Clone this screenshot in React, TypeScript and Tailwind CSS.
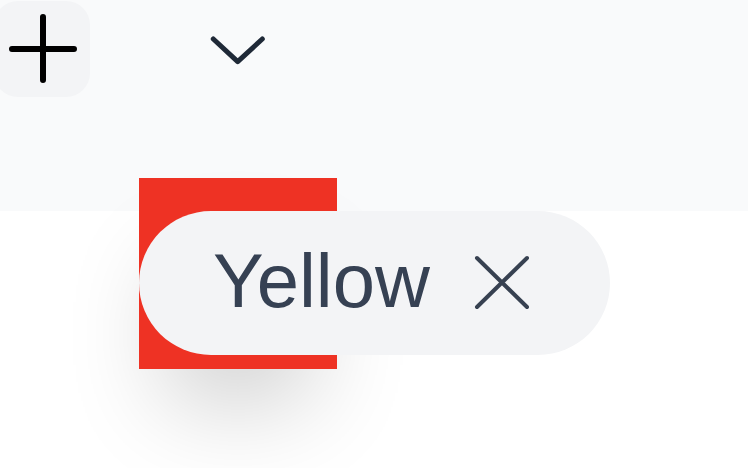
export default function App() {
  return (
    <div className="relative w-[748px] h-[468px] overflow-hidden bg-white font-['Liberation_Sans',Arial,sans-serif]">
      <div className="flex h-[211px] items-start bg-gray-50">
        <button className="-ml-[6px] mt-[1px] flex h-[96px] w-[96px] shrink-0 items-center justify-center rounded-[24px] bg-gray-100">
          <svg width="96" height="96" viewBox="0 0 96 96" fill="none" stroke="#000" strokeWidth="6" strokeLinecap="round">
            <path d="M18 48h62M49 16v63" />
          </svg>
        </button>
        <svg className="ml-[115px] mt-[30px] shrink-0" width="65" height="40" viewBox="0 0 65 40" fill="none" stroke="#1f2937" strokeWidth="5" strokeLinecap="round" strokeLinejoin="round">
          <path d="M8.3 9L32.7 31.7L57.3 9" />
        </svg>
      </div>

      {/* item being dragged */}
      <div className="absolute left-[139px] top-[178px] h-[191px] w-[198px] bg-[#ee3224] shadow-[0_60px_100px_-28px_rgba(0,0,0,0.2)]" />

      <div className="relative z-10 ml-[139px] flex h-[144px] w-[471px] items-center rounded-full bg-gray-100 pl-[74px]">
        <span className="mb-[5px] text-[76px] leading-none text-gray-700">Yellow</span>
        <svg className="ml-[42px] shrink-0" width="60" height="60" viewBox="0 0 60 60" fill="none" stroke="#374151" strokeWidth="4" strokeLinecap="round">
          <path d="M5 5L55 54M55 5L5 54" />
        </svg>
      </div>
    </div>
  )
}
